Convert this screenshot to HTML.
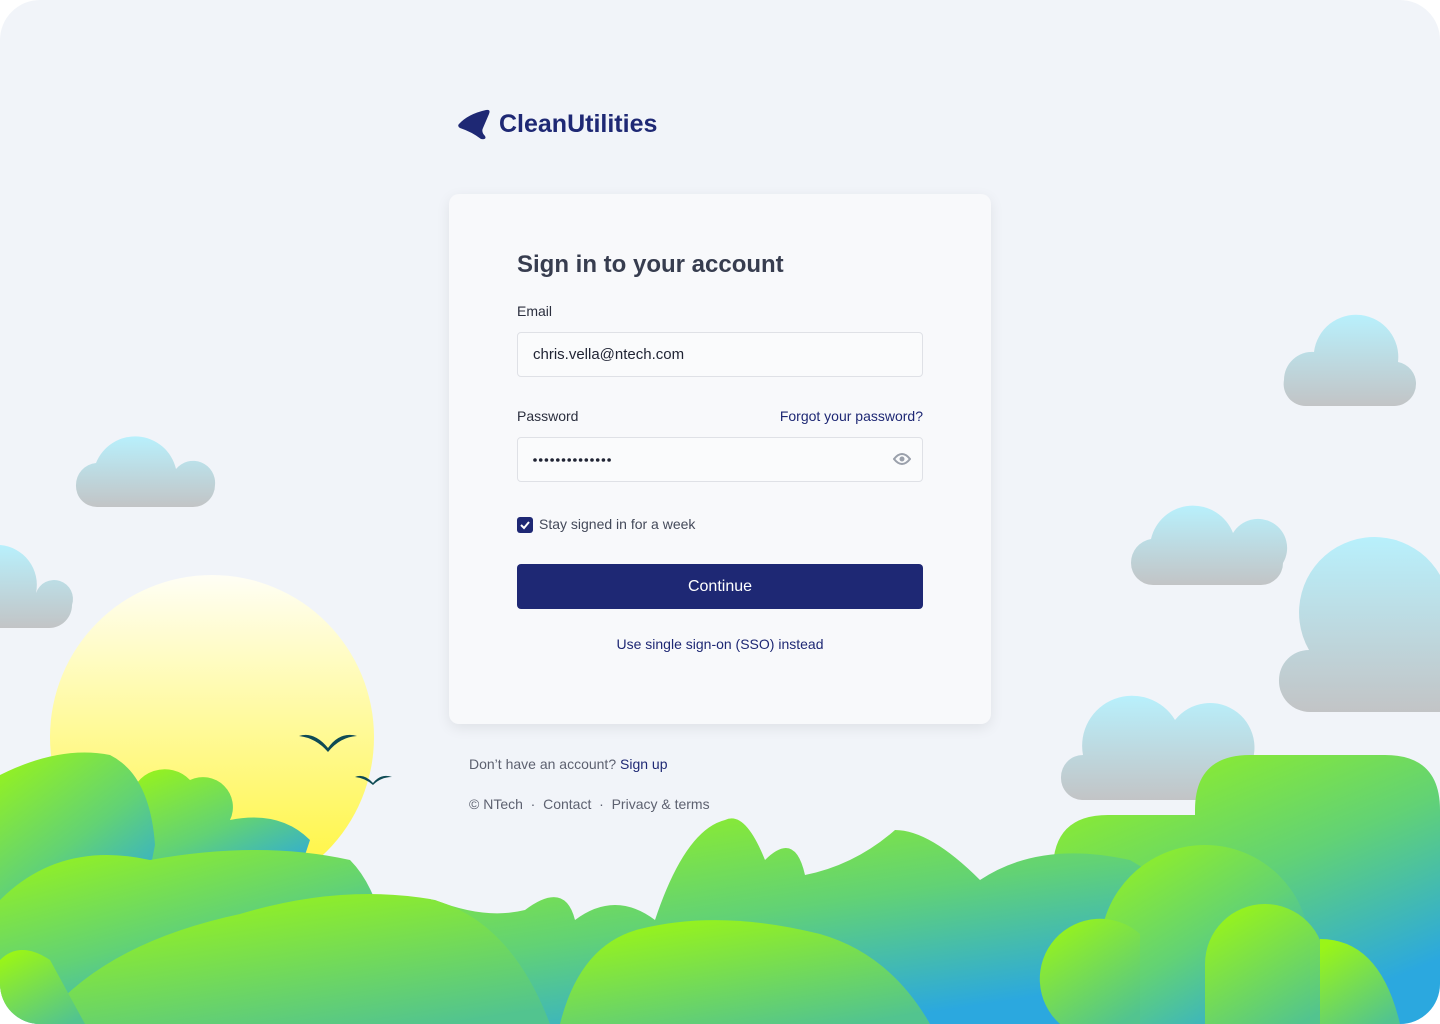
<!DOCTYPE html>
<html><head><meta charset="utf-8"><style>
*{margin:0;padding:0;box-sizing:border-box}
html,body{width:1440px;height:1024px;background:#fff;overflow:hidden;font-family:"Liberation Sans","DejaVu Sans",sans-serif}
.page{position:absolute;inset:0;background:#f1f4f9;border-radius:40px;overflow:hidden}
svg.bg{position:absolute;left:0;top:0}
.logo{position:absolute;left:458px;top:108px;display:flex;align-items:center;gap:8px;color:#1e2874;font-weight:bold;font-size:25px}
.card{position:absolute;left:449px;top:194px;width:542px;height:530px;background:#f8f9fb;border-radius:10px;box-shadow:0 4px 14px rgba(0,0,0,.08)}
.h{position:absolute;left:68px;top:57px;font-size:24px;font-weight:bold;color:#373d4f}
.lbl{position:absolute;font-size:14px;color:#2b2f3e}
.inp{position:absolute;left:68px;width:406px;height:45px;border:1px solid #dfe1e6;border-radius:4px;background:#fafbfc;font-size:15px;color:#1f2333;padding:13px 15px}
.btn{position:absolute;left:68px;top:370px;width:406px;height:45px;background:#1e2874;border-radius:4px;color:#fff;font-size:16px;text-align:center;line-height:45px}
a{color:#1e2874;text-decoration:none}
.foot{position:absolute;left:469px;font-size:14px;color:#5d6170}
</style></head><body><div class="page">
<svg class="bg" width="1440" height="1024" viewBox="0 0 1440 1024">
<defs>
<linearGradient id="g" x1="0" y1="0" x2="0.6" y2="1"><stop offset="0" stop-color="#9af517"/><stop offset="0.55" stop-color="#62d275"/><stop offset="1" stop-color="#2ba8df"/></linearGradient>
<linearGradient id="g2" x1="0.2" y1="0" x2="0.8" y2="1"><stop offset="0" stop-color="#9af517"/><stop offset="1" stop-color="#52c48f"/></linearGradient>
<linearGradient id="sun" x1="0" y1="0" x2="0" y2="1"><stop offset="0" stop-color="#fffef5"/><stop offset="1" stop-color="#fff532"/></linearGradient>
<linearGradient id="c" x1="0" y1="0" x2="0" y2="1"><stop offset="0" stop-color="#b8f0fc"/><stop offset="1" stop-color="#c2c4c6"/></linearGradient>
</defs>
<circle cx="212" cy="737" r="162" fill="url(#sun)"/>
<g fill="url(#c)">
<path d="M1284 380a28 28 0 0 1 30-28a42 42 0 0 1 84 10a22 22 0 0 1 18 22a22 22 0 0 1-22 22h-88a22 22 0 0 1-22-26z"/>
<path d="M76 485a22 22 0 0 1 20-22a42 42 0 0 1 80 6a22 22 0 0 1 39 16a22 22 0 0 1-22 22h-96a21 21 0 0 1-21-22z"/>
<path d="M1131 563a24 24 0 0 1 20-24a43 43 0 0 1 82-6a25 25 0 0 1 50 30a22 22 0 0 1-22 22h-108a22 22 0 0 1-22-22z"/>
<path d="M1279 680a30 30 0 0 1 30-30a75 75 0 0 1 131-75v137h-130a31 31 0 0 1-31-32z"/>
<path d="M1061 777a22 22 0 0 1 22-22a50 50 0 0 1 92-35a40 40 0 0 1 70 55a25 25 0 0 1-25 25h-138a22 22 0 0 1-21-23z"/>
<path d="M0 545a40 40 0 0 1 36 48a18 18 0 0 1 36 12a23 23 0 0 1-23 23h-49z"/>
</g>
<g fill="#0e4b55"><path d="M299 736q15-5 29 12q12-17 29-12q-17 1-29 16q-12-14-29-16z"/><path d="M355 777q9-4 18 6q8-10 19-6q-11 0-19 8q-8-7-18-8z"/></g>
<g fill="url(#g)">
<path d="M130 800a35 35 0 0 1 60-20a30 30 0 0 1 40 40q50-10 80 20l-20 60h-160z"/>
<path d="M0 775q60-30 110-20q40 20 45 90l-20 100h-135z"/>
<path d="M0 900q60-60 150-40q110-20 200 0q30 30 40 100v64h-390z"/>
<path d="M1053 870q0-55 55-55h87v-5q0-55 55-55h135q55 0 55 55v214h-387z"/>
<path d="M355 930q20-40 80-30q50 20 90 10q40-30 50 10q40-30 80 0q30-90 70-100q20-10 40 40q30-30 40 15q50-10 90-45q35 0 85 50q60-40 150-20l50 30v135h-725z"/>
<circle cx="1205" cy="950" r="105"/>
</g>
<g fill="url(#g2)">
<path d="M40 1024q60-80 200-110q100-30 190-15q80 20 120 125z"/>
<path d="M560 1024q20-80 80-95q80-20 180 5q70 20 110 90z"/>
<path d="M0 960q20-20 50 0l35 64h-85z"/>
<path d="M1205 1024v-60a60 60 0 0 1 120 0v60z"/>
<path d="M1060 1024a60 60 0 0 1 80-90v90z"/>
<path d="M1320 1024v-85q60 0 80 85z"/>
</g>
</svg>
<div class="logo"><svg width="33" height="32" viewBox="0 0 33 32"><path d="M1 16Q10 6 28 2q5-1 3 4l-6 14q-2 4 2 8q2 4-4 3Q14 24 2 20q-3-2-1-4z" fill="#1e2874"/></svg><span>CleanUtilities</span></div>
<div class="card">
<div class="h">Sign in to your account</div>
<div class="lbl" style="left:68px;top:109px">Email</div>
<div class="inp" style="top:138px">chris.vella@ntech.com</div>
<div class="lbl" style="left:68px;top:214px">Password</div>
<div class="lbl" style="right:68px;top:214px;color:#1e2874">Forgot your password?</div>
<div class="inp" style="top:243px">
<svg style="position:absolute;left:15px;top:19px" width="82" height="6" viewBox="0 0 82 6" fill="#1f2333"><circle cx="2" cy="3" r="1.8"/><circle cx="7.7" cy="3" r="1.8"/><circle cx="13.4" cy="3" r="1.8"/><circle cx="19.1" cy="3" r="1.8"/><circle cx="24.8" cy="3" r="1.8"/><circle cx="30.5" cy="3" r="1.8"/><circle cx="36.2" cy="3" r="1.8"/><circle cx="41.9" cy="3" r="1.8"/><circle cx="47.6" cy="3" r="1.8"/><circle cx="53.3" cy="3" r="1.8"/><circle cx="59" cy="3" r="1.8"/><circle cx="64.7" cy="3" r="1.8"/><circle cx="70.4" cy="3" r="1.8"/><circle cx="76.1" cy="3" r="1.8"/></svg>
<svg style="position:absolute;right:11px;top:14px" width="18" height="14" viewBox="0 0 18 14"><path d="M1 7q8-10 16 0q-8 10-16 0z" fill="none" stroke="#9aa0ab" stroke-width="2"/><circle cx="9" cy="7" r="2.5" fill="#9aa0ab"/></svg></div>
<div style="position:absolute;left:68px;top:323px;width:16px;height:16px;background:#1e2874;border-radius:3px"><svg width="16" height="16"><path d="M4 8l3 3l5-6" stroke="#fff" stroke-width="2" fill="none"/></svg></div>
<div class="lbl" style="left:90px;top:322px;color:#444a5a">Stay signed in for a week</div>
<div class="btn">Continue</div>
<div class="lbl" style="left:0;width:542px;text-align:center;top:442px;color:#1e2874">Use single sign-on (SSO) instead</div>
</div>
<div class="foot" style="top:756px">Don’t have an account? <a>Sign up</a></div>
<div class="foot" style="top:796px">© NTech &nbsp;·&nbsp; Contact &nbsp;·&nbsp; Privacy &amp; terms</div>
</div></body></html>
